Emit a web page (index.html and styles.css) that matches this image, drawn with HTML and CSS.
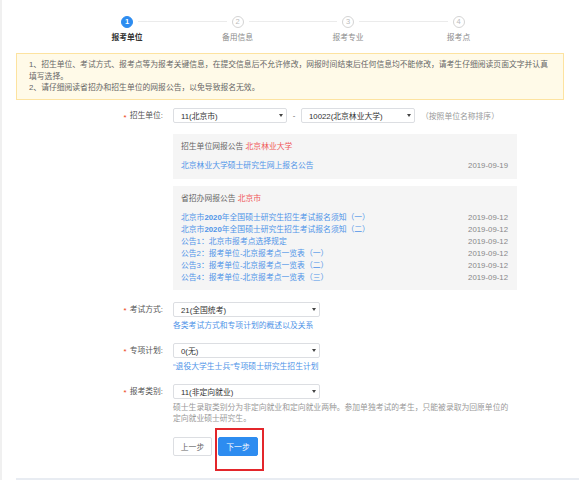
FILE: index.html
```html
<!DOCTYPE html>
<html lang="zh-CN">
<head>
  <meta charset="UTF-8" />
  <meta name="viewport" content="width=device-width, initial-scale=1.0"/>
  <title>网上报名 - 报考单位</title>
  <link rel="stylesheet" href="styles.css">
</head>
<body>
  <div class="page">
    <div class="steps">
      <div class="step active">
        <div class="step-head"><span class="step-line none"></span><span class="step-num">1</span><span class="step-line"></span></div>
        <div class="step-title">报考单位</div>
      </div>
      <div class="step">
        <div class="step-head"><span class="step-line"></span><span class="step-num">2</span><span class="step-line"></span></div>
        <div class="step-title">备用信息</div>
      </div>
      <div class="step">
        <div class="step-head"><span class="step-line"></span><span class="step-num">3</span><span class="step-line"></span></div>
        <div class="step-title">报考专业</div>
      </div>
      <div class="step">
        <div class="step-head"><span class="step-line"></span><span class="step-num">4</span><span class="step-line none"></span></div>
        <div class="step-title">报考点</div>
      </div>
    </div>

    <div class="tips">
      1、招生单位、考试方式、报考点等为报考关键信息，在提交信息后不允许修改，网报时间结束后任何信息均不能修改，请考生仔细阅读页面文字并认真填写选择。<br>
      2、请仔细阅读省招办和招生单位的网报公告，以免导致报名无效。
    </div>

    <div class="form">
      <div class="row">
        <label class="row-label required">招生单位:</label>
        <div class="field">
          <div class="field-line">
            <div class="select short"><span>11(北京市)</span><i class="caret"></i></div>
            <span class="dash">-</span>
            <div class="select short"><span>10022(北京林业大学)</span><i class="caret"></i></div>
            <span class="hint">（按照单位名称排序）</span>
          </div>
          <div class="notice">
            <div class="notice-title">招生单位网报公告 <span class="red">北京林业大学</span></div>
            <ul class="notice-list">
              <li><a href="#">北京林业大学硕士研究生网上报名公告</a><span class="date">2019-09-19</span></li>
            </ul>
          </div>
          <div class="notice last">
            <div class="notice-title">省招办网报公告 <span class="red">北京市</span></div>
            <ul class="notice-list">
              <li><a href="#">北京市<b>2020</b>年全国硕士研究生招生考试报名须知（一）</a><span class="date">2019-09-12</span></li>
              <li><a href="#">北京市<b>2020</b>年全国硕士研究生招生考试报名须知（二）</a><span class="date">2019-09-12</span></li>
              <li><a href="#">公告1：北京市报考点选择规定</a><span class="date">2019-09-12</span></li>
              <li><a href="#">公告2：报考单位-北京报考点一览表（一）</a><span class="date">2019-09-12</span></li>
              <li><a href="#">公告3：报考单位-北京报考点一览表（二）</a><span class="date">2019-09-12</span></li>
              <li><a href="#">公告4：报考单位-北京报考点一览表（三）</a><span class="date">2019-09-12</span></li>
            </ul>
          </div>
        </div>
      </div>

      <div class="row">
        <label class="row-label required">考试方式:</label>
        <div class="field">
          <div class="select wide"><span>21(全国统考)</span><i class="caret"></i></div>
          <div class="help"><a href="#">各类考试方式和专项计划的概述以及关系</a></div>
        </div>
      </div>

      <div class="row">
        <label class="row-label required">专项计划:</label>
        <div class="field">
          <div class="select wide"><span>0(无)</span><i class="caret"></i></div>
          <div class="help"><a href="#">“退役大学生士兵”专项硕士研究生招生计划</a></div>
        </div>
      </div>

      <div class="row">
        <label class="row-label required">报考类别:</label>
        <div class="field">
          <div class="select wide"><span>11(非定向就业)</span><i class="caret"></i></div>
          <div class="help gray">硕士生录取类别分为非定向就业和定向就业两种。参加单独考试的考生，只能被录取为回原单位的定向就业硕士研究生。</div>
        </div>
      </div>

      <div class="actions">
        <button class="btn">上一步</button>
        <button class="btn primary">下一步</button>
        <span class="mark"></span>
      </div>
    </div>

    <div class="page-foot"></div>
  </div>
</body>
</html>
```

FILE: styles.css
```css
* {
  box-sizing: border-box;
}
body, html {
  margin: 0;
  padding: 0;
  overflow: hidden;
  height: 100%;
  font-family: "Liberation Sans", "Noto Sans CJK SC", sans-serif;
  font-size: 7.8px;
  color: #666;
  background: #fff;
}
.page {
  border-left: 2px solid #f0f0f0;
  min-height: 100%;
}

/* steps */
.steps {
  display: flex;
  padding: 15.5px 0 0 69.75px;
}
.step {
  width: 110.5px;
  text-align: center;
}
.step-head {
  display: flex;
  align-items: center;
  height: 12px;
}
.step-line {
  flex: 1;
  height: 1px;
  background: #ebebeb;
}
.step-line:first-child {
  margin-right: 5px;
}
.step-line:last-child {
  margin-left: 5px;
}
.step-line.none {
  background: transparent;
}
.step-num {
  width: 12px;
  height: 12px;
  border: 1px solid #d4d4d4;
  border-radius: 50%;
  line-height: 10px;
  font-size: 7.5px;
  color: #bbb;
  background: #fff;
}
.step.active .step-num {
  border-color: #2d8cf0;
  background: #2d8cf0;
  color: #fff;
  font-weight: bold;
}
.step-title {
  margin-top: 4.5px;
  line-height: 12px;
  color: #8c8c8c;
}
.step.active .step-title {
  color: #333;
  font-weight: bold;
}

/* tips */
.tips {
  margin: 8.6px 15px 0 14px;
  padding: 5.5px 12px;
  border: 1px solid #fde3a0;
  background: #fffae8;
  line-height: 11.5px;
  color: #666;
}

/* form */
.form {
  margin-top: 8px;
}
.row {
  display: flex;
  align-items: flex-start;
}
.row + .row {
  margin-top: 12px;
}
.row-label {
  flex: none;
  width: 161px;
  margin-right: 10px;
  text-align: right;
  line-height: 15px;
  color: #555;
}
.required::before {
  content: "*";
  color: #ed4014;
  margin-right: 3px;
  vertical-align: -1.5px;
}
.field-line {
  display: flex;
  align-items: center;
}
.select {
  display: flex;
  align-items: center;
  justify-content: space-between;
  height: 15px;
  padding: 0 3px 0 7px;
  border: 1px solid #dcdee2;
  border-radius: 2px;
  background: #fff;
  color: #333;
}
.select.short {
  width: 114px;
}
.select.wide {
  width: 147px;
}
.caret {
  border-left: 2.5px solid transparent;
  border-right: 2.5px solid transparent;
  border-top: 3.5px solid #444;
}
.dash {
  width: 14px;
  text-align: center;
  color: #666;
}
.hint {
  margin-left: 6px;
  color: #999;
}

.notice {
  width: 344px;
  margin-top: 10.5px;
  padding: 7px 9px 7px 8px;
  background: #f5f5f5;
  line-height: 12px;
}
.notice + .notice {
  margin-top: 7px;
}
.notice.last {
  padding-bottom: 6px;
}
.notice-title {
  margin-bottom: 7px;
  color: #666;
}
.red {
  color: #f05a5a;
}
.notice-list {
  list-style: none;
  margin: 0;
  padding: 0;
}
.notice-list li {
  display: flex;
  justify-content: space-between;
}
a {
  color: #4f94e8;
  text-decoration: none;
}
.date {
  color: #888;
}

.help {
  margin-top: 3px;
  max-width: 340px;
  line-height: 11px;
}
.help.gray {
  color: #999;
}

/* buttons */
.actions {
  position: relative;
  display: flex;
  gap: 6px;
  margin: 13px 0 0 171px;
}
.btn {
  width: 39px;
  height: 19px;
  padding: 0;
  border: 1px solid #dcdee2;
  border-radius: 2px;
  background: #fff;
  font-family: inherit;
  font-size: 7.8px;
  color: #666;
}
.btn.primary {
  width: 40px;
  border-color: #2d8cf0;
  background: #2d8cf0;
  color: #fff;
}
.mark {
  position: absolute;
  left: 42px;
  top: -9px;
  width: 49px;
  height: 43px;
  border: 2px solid #e3262b;
}

.page-foot {
  height: 3px;
  margin: 22px 0 0 14px;
  background: #e8ecf2;
}
```
